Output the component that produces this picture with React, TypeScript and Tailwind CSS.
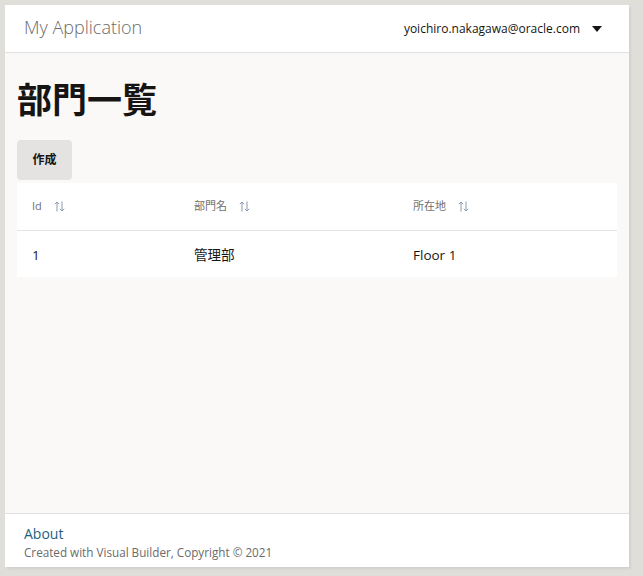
import React from 'react';

const font = { fontFamily: '"Open Sans", "Noto Sans CJK JP", sans-serif' };

const SortIcon = () => (
  <svg width="11" height="11" viewBox="0 0 11 11" className="ml-3 inline-block">
    <path d="M3 10.5V1M0.8 3.2L3 1l2.2 2.2" stroke="#8a9bb0" strokeWidth="1" fill="none" />
    <path d="M8 0.5V10M5.8 7.8L8 10l2.2-2.2" stroke="#8a9bb0" strokeWidth="1" fill="none" />
  </svg>
);

const columns = ['Id', '部門名', '所在地'];
const rows = [{ id: '1', name: '管理部', location: 'Floor 1' }];

export default function App() {
  return (
    <div className="w-[643px] h-[576px] bg-[#e0ded9] pt-[5px] pl-[5px]" style={font}>
      <div className="w-[624px] h-[562px] bg-[#faf9f8] flex flex-col shadow-[2px_2px_2px_rgba(0,0,0,0.06)]">
        {/* header */}
        <div className="h-[48px] bg-white border-b border-[#e0e0e0] flex items-center justify-between pl-[19px] pr-[27px] pb-[3px] shrink-0">
          <span className="text-[18px] font-light text-[#6b6b6b]">My Application</span>
          <div className="flex items-center pt-[3px]">
            <span className="text-[12px] text-[#161513] mr-[12px]">yoichiro.nakagawa@oracle.com</span>
            <svg width="10" height="6" viewBox="0 0 10 6">
              <path d="M0 0h10L5 6z" fill="#161513" />
            </svg>
          </div>
        </div>

        {/* content */}
        <div className="flex-1 px-[12px] pt-[27px]">
          <h1 className="text-[35px] font-bold text-[#161513] leading-[40px]">部門一覧</h1>
          <button className="mt-[20px] h-[40px] w-[55px] rounded-[4px] bg-[#e4e3e1] text-[12px] font-bold text-[#161513]">
            作成
          </button>
          <div className="mt-[3px] bg-white">
            <div className="grid grid-cols-[162px_219px_1fr] h-[48px] items-center border-b border-[#e4e4e4] px-[15px]">
              {columns.map(c => (
                <div key={c} className="flex items-center text-[11px] text-[#6f6f6f]">
                  {c}
                  <SortIcon />
                </div>
              ))}
            </div>
            {rows.map(r => (
              <div key={r.id} className="grid grid-cols-[162px_219px_1fr] h-[46px] items-center px-[15px] pt-[3px] text-[13.5px] text-[#161513]">
                <div>{r.id}</div>
                <div>{r.name}</div>
                <div>{r.location}</div>
              </div>
            ))}
          </div>
        </div>

        {/* footer */}
        <div className="h-[54px] bg-white border-t border-[#e0e0e0] pl-[19px] pt-[11px] shrink-0">
          <div className="text-[14px] text-[#1d5f80] leading-[18px]">About</div>
          <div className="text-[11.7px] text-[#6b6b6b] leading-[16px] mt-[1px]">Created with Visual Builder, Copyright © 2021</div>
        </div>
      </div>
    </div>
  );
}
